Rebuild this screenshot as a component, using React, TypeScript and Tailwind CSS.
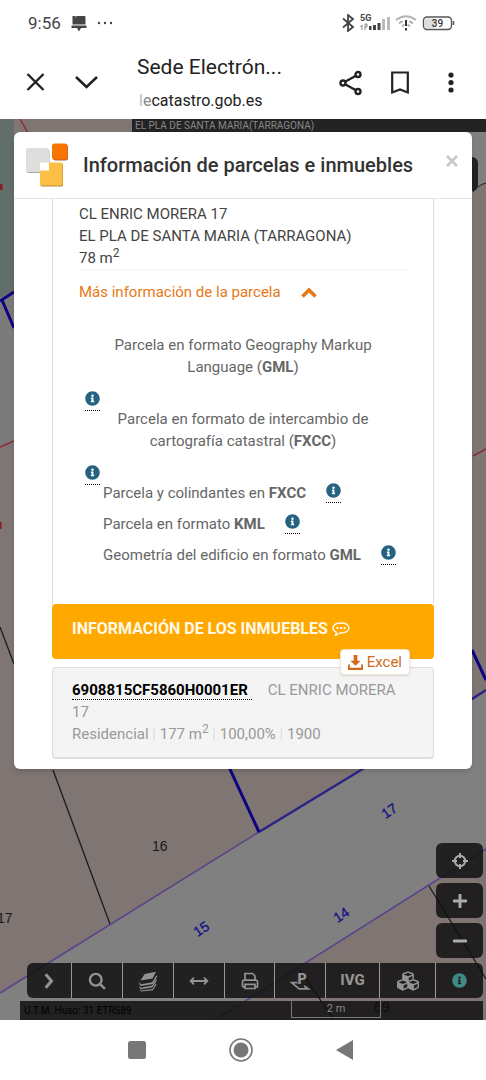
import type { ReactNode } from 'react';
import { FaCubes, FaInfoCircle, FaMinus, FaPlus } from 'react-icons/fa';

function SignalIcons() {
  return (
    <svg viewBox="0 0 113 18" className="h-[18px] w-[113px]" aria-hidden="true">
      <path d="M1 4.500l10 8.500-5 4V1l5 4L1 13.500" fill="none" stroke="#444" strokeWidth="1.800" />
      <text x="18" y="7" fontSize="9" fontWeight="700" fill="#444">5G</text>
      <path d="M20 16v-5m-1.500 2l1.500-2M23 10v6m0-6h2v3h-2" stroke="#888" strokeWidth="1" fill="none" />
      <path d="M27 16v-4h2.500v4zM31 16v-5h3v5zM35.500 16V9h3v7z" fill="#444" />
      <path d="M40 16V5h3v11zM45 16V3h3v13z" fill="#bbb" />
      <g fill="none" strokeWidth="1.800">
        <path d="M54 6q10-7.500 20 0" stroke="#b3b3b3" />
        <path d="M57 9.500q2-2 4-2M71 9.500q-2-2-4-2M60 12.500l2.500-2M68 12.500l-2.500-2" stroke="#b3b3b3" />
        <path d="M64 6v6M64 14v2.500" stroke="#333" strokeWidth="2" />
      </g>
      <rect x="81.500" y="3" width="28" height="12.500" rx="3.500" fill="#fff" stroke="#555" strokeWidth="1.400" />
      <rect x="83" y="4.500" width="10" height="9.500" rx="2" fill="#ddd" />
      <path d="M111.500 7v4" stroke="#555" strokeWidth="1.500" />
      <text x="95.500" y="13" fontSize="10" fontWeight="500" fill="#333" textAnchor="middle">39</text>
    </svg>
  );
}

function StatusBar() {
  return (
    <div className="flex h-[46px] items-center justify-between pl-7 pr-[31px] text-[#444]">
      <div className="flex items-center gap-2.5">
        <span className="text-[17px] leading-6">9:56</span>
        <svg viewBox="0 0 16 17" className="h-[17px] w-4" fill="#444" aria-hidden="true">
          <path d="M1.500 1h3v2l1-2H14l.5 1v7.500h-13z" />
          <path d="M.5 10.500h15v2.500H10l-2 3.500L6 13H.5z" />
        </svg>
        <svg viewBox="0 0 16 4" className="h-1 w-4" fill="#444" aria-hidden="true">
          <circle cx="2" cy="2" r="1.200" />
          <circle cx="8" cy="2" r="1.200" />
          <circle cx="14" cy="2" r="1.200" />
        </svg>
      </div>
      <SignalIcons />
    </div>
  );
}

function BrowserBar() {
  return (
    <header className="flex h-[73px] items-center pl-[26px] pr-[26px] text-[#222]">
      <button aria-label="Cerrar pestaña">
        <svg viewBox="0 0 20 20" className="size-5" fill="none" stroke="currentColor" strokeWidth="2.400">
          <path d="M1.500 1l16 16M17.500 1l-16 16" />
        </svg>
      </button>
      <button aria-label="Minimizar" className="ml-7">
        <svg viewBox="0 0 24 20" className="h-5 w-6" fill="none" stroke="currentColor" strokeWidth="2.600">
          <path d="M2 4l10.500 10L23 4" />
        </svg>
      </button>
      <div className="ml-[39px] min-w-0 flex-1">
        <p className="truncate text-[21px] leading-7">Sede Electrón...</p>
        <p className="mt-2 truncate pl-0.5 text-base leading-6">
          <span className="text-[#bbb]">l</span>
          <span className="text-[#888]">e</span>catastro.gob.es
        </p>
      </div>
      <button aria-label="Compartir">
        <svg viewBox="0 0 24 26" className="h-[26px] w-6" fill="none" stroke="currentColor" strokeWidth="2.400">
          <circle cx="4" cy="13" r="2.500" />
          <circle cx="19" cy="4.500" r="2.500" />
          <circle cx="19" cy="21.500" r="2.500" />
          <path d="M6.500 11.500l10-5.500M6.500 14.500l10 5.500" />
        </svg>
      </button>
      <button aria-label="Guardar" className="ml-7">
        <svg viewBox="0 0 18 24" className="h-6 w-[18px]" fill="none" stroke="currentColor" strokeWidth="2.200">
          <path d="M1.200 1.500h15.600v20L9 18.500l-7.800 3z" />
        </svg>
      </button>
      <button aria-label="Más opciones" className="ml-[33px]">
        <svg viewBox="0 0 18 22" className="h-[22px] w-[18px]" fill="currentColor">
          <circle cx="9" cy="3" r="2.600" />
          <circle cx="9" cy="10.500" r="2.600" />
          <circle cx="9" cy="18" r="2.600" />
        </svg>
      </button>
    </header>
  );
}

function MapDrawing() {
  return (
    <svg
      viewBox="0 119 486 901"
      preserveAspectRatio="none"
      className="absolute inset-0 h-full w-full"
      fontFamily="Liberation Sans"
      aria-hidden="true"
    >
      <path d="M0 119h486v901H0z" fill="#7f7573" />
      <path d="M0 119h14v172l-14 7z" fill="#626e69" />
      <path d="M0 298l14-7v150L0 447z" fill="#7c7b7b" />
      <path d="M470 119h16v64q-10 2-16 9z" fill="#808080" />
      <path d="M0 993L259 832l227-142v159L215 1020H0z" fill="#808080" />
      <rect x="440" y="157" width="38" height="34" rx="6" fill="#242323" />
      <path d="M473 192q5-7 13-9" fill="none" stroke="#222" />
      <path d="M20 119l8 14M0 447l14-6M473 456l13-7" stroke="#8b2b36" strokeWidth="1.500" fill="none" />
      <path d="M0 522v7M1 184v6" stroke="#8b1a22" strokeWidth="3" />
      <path d="M0 627l14 37M53 770l57 154M429 886l57 93M300 970l34 50" stroke="#1c1a1a" strokeWidth="1.300" fill="none" />
      <path d="M0 993l259-161M215 1020l271-171" stroke="#59438c" strokeWidth="1.600" />
      <path d="M259 832l102-62 125-80" stroke="#2d2387" strokeWidth="2.500" fill="none" />
      <path d="M0 301l14-9M2 300l12 28M222 752l37 80M472 650l14 30" stroke="#0d0382" strokeWidth="3" fill="none" />
      <g fontSize="14" fill="#1b1919">
        <text x="152" y="851">16</text>
        <text x="-3" y="923">17</text>
        <text x="374" y="1012" fill="#000">69</text>
      </g>
      <g fontSize="14" fill="#14108a" stroke="#14108a" strokeWidth="0.300" textAnchor="middle">
        <text transform="translate(392 815) rotate(-34)">17</text>
        <text transform="translate(204 933) rotate(-34)">15</text>
        <text transform="translate(344 919) rotate(-34)">14</text>
      </g>
    </svg>
  );
}

function InfoButton({ label }: { label: string }) {
  return (
    <button aria-label={label} className="border-b border-dotted border-black pb-1 text-[#256380]">
      <FaInfoCircle className="size-[15px]" />
    </button>
  );
}

function BlockDownload({ children, info }: { children: ReactNode; info: string }) {
  return (
    <li>
      <a href="#descarga" className="block pl-3.5 pr-5 text-center">{children}</a>
      <div className="mt-[13px] flex h-[17px] items-start"><InfoButton label={info} /></div>
    </li>
  );
}

function InlineDownload({ children, info }: { children: ReactNode; info: string }) {
  return (
    <li className="mb-[9px] flex h-[22px] items-center gap-5 pl-[18px]">
      <a href="#descarga">{children}</a>
      <InfoButton label={info} />
    </li>
  );
}

function CatastroLogo() {
  return (
    <svg viewBox="0 0 44 46" className="h-[46px] w-11 shrink-0" aria-hidden="true">
      <rect x="1.500" y="7" width="23" height="24" rx="2.500" fill="#a9a9a9" />
      <rect x="1" y="6" width="23" height="24" rx="2.500" fill="#dedede" />
      <rect x="28" y="2.500" width="15" height="16" rx="2.500" fill="#b9602c" />
      <rect x="27" y="1.500" width="15.500" height="16" rx="2.500" fill="#f97400" />
      <rect x="15.500" y="21.500" width="22.500" height="23" rx="1.500" fill="#b28c3c" />
      <rect x="15" y="20.500" width="22.500" height="23" rx="1.500" fill="#fbbf45" />
      <path d="M15 20.500h9v8h-9z" fill="#fff" />
    </svg>
  );
}

function ParcelDialog() {
  return (
    <section
      role="dialog"
      aria-labelledby="dialog-title"
      className="relative mx-3.5 overflow-hidden rounded-md bg-white pb-2.5 shadow-md"
    >
      <div className="flex h-[67px] items-center border-b border-[#e5e5e5] pl-[11px] pr-3">
        <CatastroLogo />
        <h1 id="dialog-title" className="ml-3.5 flex-1 whitespace-nowrap text-xl font-medium text-[#333]">
          Información de parcelas e inmuebles
        </h1>
        <button aria-label="Cerrar" className="mb-2 p-0.5 text-[#c8c8c8]">
          <svg viewBox="0 0 12 12" className="size-3" fill="none" stroke="currentColor" strokeWidth="2.600">
            <path d="M1 1l10 10M11 1L1 11" />
          </svg>
        </button>
      </div>

      <div className="mx-[38px] text-[15px] leading-[22px]">
        <div className="border-x border-[#ddd] px-[26px] pb-[29px] pt-1 text-[#444]">
          <p>CL ENRIC MORERA 17</p>
          <p>EL PLA DE SANTA MARIA (TARRAGONA)</p>
          <p>78 m<sup className="text-xs leading-none">2</sup></p>
          <hr className="border-[#f4f4f4]" />
          <button className="mt-[11px] flex items-center gap-5 text-[#e67817]">
            Más información de la parcela
            <svg viewBox="0 0 16 11" className="h-[11px] w-4" fill="none" stroke="currentColor" strokeWidth="3.600">
              <path d="M1.500 9.500L8 3l6.500 6.500" />
            </svg>
          </button>
          <ul className="mt-[31px] pl-[6px] text-[#666]">
            <BlockDownload info="Información sobre GML">
              Parcela en formato Geography Markup Language (<b>GML</b>)
            </BlockDownload>
            <BlockDownload info="Información sobre FXCC">
              Parcela en formato de intercambio de cartografía catastral (<b>FXCC</b>)
            </BlockDownload>
            <InlineDownload info="Información sobre colindantes">Parcela y colindantes en <b>FXCC</b></InlineDownload>
            <InlineDownload info="Información sobre KML">Parcela en formato <b>KML</b></InlineDownload>
            <InlineDownload info="Información sobre el edificio">Geometría del edificio en formato <b>GML</b></InlineDownload>
          </ul>
        </div>

        <div className="relative mb-2 h-[55px] rounded-sm bg-[#ffa800] px-5 pt-3.5 text-[#fff9e8]">
          <h2 className="flex items-center gap-1 whitespace-nowrap text-base leading-[22px] font-bold">
            INFORMACIÓN DE LOS INMUEBLES
            <svg viewBox="0 0 18 16" className="h-4 w-[18px]" fill="none" stroke="currentColor" strokeWidth="1.400" aria-hidden="true">
              <path d="M4.500 11.500Q1 9.700 1 7q.5-5 8-5t8 5q-.5 5-9 5l-4.500 2.500z" strokeLinejoin="round" />
              <path d="M4.500 7h2M8 7h2M11.500 7h2" strokeWidth="2" />
            </svg>
          </h2>
          <button className="absolute -bottom-4 right-6 flex h-[26px] items-center gap-1 rounded-sm border border-[#f3e4d2] bg-white px-[7px] text-[#d2691e] shadow-sm">
            <svg viewBox="0 0 16 16" className="size-[15px]" fill="currentColor" aria-hidden="true">
              <path d="M6 0h4v6h3.500L8 11.500 2.500 6H6z" />
              <path d="M0 10h2v3.500h12V10h2v6H0z" />
            </svg>
            Excel
          </button>
        </div>

        <div className="rounded-sm border border-b-2 border-[#ddd] bg-[#f4f4f4] pb-3 pl-[19px] pr-8 pt-[11px] text-[#999]">
          <p>
            <a href="#inmueble" className="mr-4 border-b border-dotted border-black pr-1 font-bold text-black">
              6908815CF5860H0001ER
            </a>
            CL ENRIC MORERA 17
          </p>
          <p>
            Residencial <span className="text-[#ddd]">|</span> 177 m<sup className="text-xs leading-none">2</sup>{' '}
            <span className="text-[#ddd]">|</span> 100,00% <span className="text-[#ddd]">|</span> 1900
          </p>
        </div>
      </div>
    </section>
  );
}

const TOOLS = [
  {
    label: 'Desplegar',
    icon: <path d="M8 4l7 8-7 8" fill="none" stroke="currentColor" strokeWidth="3.600" />,
  },
  {
    label: 'Buscar',
    icon: (
      <g fill="none" stroke="currentColor" strokeWidth="2.800">
        <circle cx="10.500" cy="10.500" r="7" />
        <path d="M15.500 15.500l6 6" />
      </g>
    ),
  },
  {
    label: 'Capas',
    icon: (
      <g fill="currentColor">
        <path d="M8 3.500L21.500 1l-4 8L3 11.500z" />
        <path d="M3 11q-2 4 1 5l13-2.500L22 5l1 1.500-5 9L4 18q-4.500-2-1-7z" />
        <path d="M3 15.500q-2 4 1 4.500l13-2.500 5-8 .5 2-5 8L4 22q-4-1.500-1-6.500z" />
        <path d="M3 20q-1 3 1 3.500l13.500-2 4-7 .5 2-4 6.500L4 24.500Q1 23 3 20z" />
      </g>
    ),
  },
  {
    label: 'Medir',
    icon: <path d="M2 12h20M6 8l-4 4 4 4M18 8l4 4-4 4" fill="none" stroke="currentColor" strokeWidth="2.200" />,
  },
  {
    label: 'Imprimir',
    icon: (
      <g fill="none" stroke="currentColor" strokeWidth="2">
        <path d="M6 11V3h9l3 3v5M3 19v-6q0-2 2-2h14q2 0 2 2v6h-3M3 19h3" />
        <path d="M6 16h12v5H6z" />
      </g>
    ),
  },
  {
    label: 'Parcela',
    icon: (
      <g fill="none" stroke="currentColor" strokeWidth="2">
        <text x="9" y="16" fontSize="17" fontWeight="900" fill="currentColor" stroke="none">P</text>
        <path d="M9 14H2l9 7.500h11L17 18" />
      </g>
    ),
  },
];

function MapToolbar() {
  return (
    <nav
      aria-label="Herramientas del mapa"
      className="grid grid-cols-[45fr_51fr_51fr_51fr_50fr_51fr_54fr_56fr_47fr] divide-x divide-[#999] overflow-hidden rounded-md bg-[#111]/85 text-[#939393]"
    >
      {TOOLS.map(tool => (
        <button key={tool.label} aria-label={tool.label} className="flex h-[35px] items-center justify-center">
          <svg viewBox="0 0 24 24" className="size-5 overflow-visible">{tool.icon}</svg>
        </button>
      ))}
      <button className="flex items-center justify-center text-[15px] font-extrabold">IVG</button>
      <button aria-label="Volúmenes" className="flex items-center justify-center"><FaCubes className="size-[22px]" /></button>
      <button aria-label="Información" className="flex items-center justify-center text-[#3f8a87]">
        <FaInfoCircle className="size-[15px]" />
      </button>
    </nav>
  );
}

const ZOOM_CONTROLS = [
  {
    label: 'Mi posición',
    icon: (
      <svg viewBox="0 0 16 16" className="size-4" fill="none" stroke="currentColor" strokeWidth="2">
        <circle cx="8" cy="8" r="5.200" />
        <path d="M8 0v5M8 11v5M0 8h5M11 8h5" />
      </svg>
    ),
  },
  { label: 'Acercar', icon: <FaPlus className="size-4" /> },
  { label: 'Alejar', icon: <FaMinus className="size-4" /> },
];

function ZoomControls() {
  return (
    <div className="mb-[5px] flex flex-col items-end gap-[5px]">
      {ZOOM_CONTROLS.map(control => (
        <button
          key={control.label}
          aria-label={control.label}
          className="flex h-[35px] w-[47px] items-center justify-center rounded-md bg-[#111]/85 text-[#aaa]"
        >
          {control.icon}
        </button>
      ))}
    </div>
  );
}

function NavigationBar() {
  return (
    <footer className="flex h-[60px] items-center justify-center gap-[83px] pr-1 text-[#777]">
      <button aria-label="Recientes">
        <svg viewBox="0 0 18 18" className="size-[18px]" fill="currentColor"><rect width="18" height="18" rx="2.500" /></svg>
      </button>
      <button aria-label="Inicio">
        <svg viewBox="0 0 24 24" className="size-6">
          <circle cx="12" cy="12" r="11" fill="none" stroke="currentColor" strokeWidth="1.600" />
          <circle cx="12" cy="12" r="7.500" fill="currentColor" />
        </svg>
      </button>
      <button aria-label="Atrás">
        <svg viewBox="0 0 18 20" className="h-5 w-[18px]" fill="currentColor"><path d="M17 0v20L0 10z" /></svg>
      </button>
    </footer>
  );
}

export default function App() {
  return (
    <div className="flex min-h-screen flex-col bg-white font-['Roboto',sans-serif]">
      <StatusBar />
      <BrowserBar />
      <main className="relative flex flex-1 flex-col overflow-hidden">
        <MapDrawing />
        <p className="relative ml-[132px] h-[13px] bg-[#242323] pl-[3px] text-[10px] leading-[13px] text-[#888]">
          EL PLA DE SANTA MARIA(TARRAGONA)
        </p>
        <ParcelDialog />
        <div className="relative mt-auto pl-5 pr-[3px] pt-4">
          <ZoomControls />
          <div className="ml-[7px]"><MapToolbar /></div>
          <div className="mt-[3px] flex h-[19px] items-start justify-between bg-[#111]/85 pl-1 pr-[102px] text-[10px] leading-[19px] text-black">
            <span>U.T.M. Huso: 31 ETRS89</span>
            <span className="h-[17px] w-[90px] border border-t-0 border-[#777] text-center text-[11px] leading-4 text-[#888]">2 m</span>
          </div>
        </div>
      </main>
      <NavigationBar />
    </div>
  );
}
